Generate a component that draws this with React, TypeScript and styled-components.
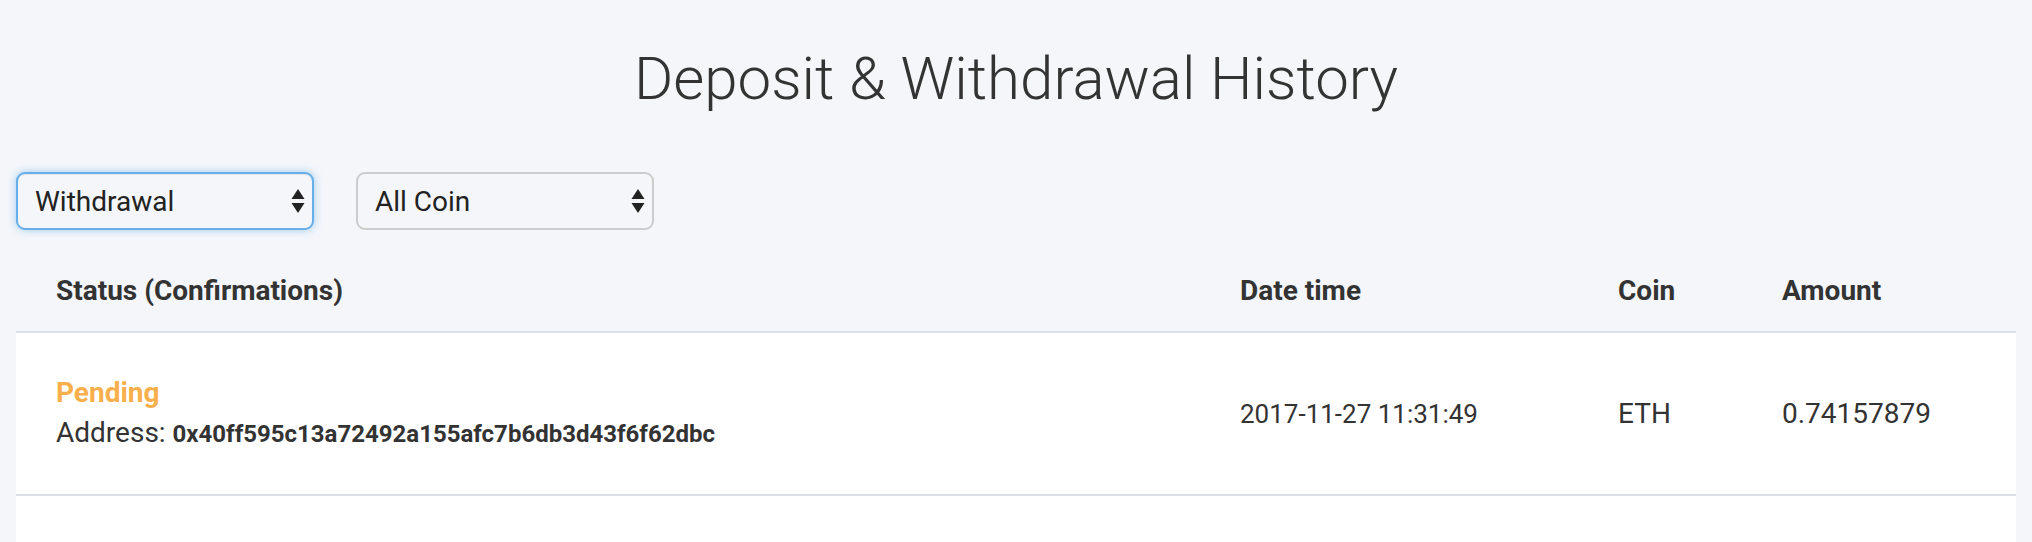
import React from "react";
import styled, { createGlobalStyle } from "styled-components";

const GlobalStyle = createGlobalStyle`
  html, body {
    margin: 0;
    padding: 0;
    background: #f4f6fa;
    font-family: Roboto, "Liberation Sans", Arial, sans-serif;
    color: #333;
  }
  * { box-sizing: border-box; }
`;

const Page = styled.div`
  display: flex;
  flex-direction: column;
  padding: 0 16px;
  min-height: 542px;
`;

const Title = styled.h1`
  margin: 46px 0 0;
  font-weight: 300;
  font-size: 60px;
  line-height: 66px;
  text-align: center;
  color: #333;
`;

const Filters = styled.div`
  display: flex;
  gap: 42px;
  margin-top: 60px;
`;

const SelectWrap = styled.div`
  position: relative;
  width: 298px;
  height: 58px;
`;

const Select = styled.select<{ $focused?: boolean }>`
  appearance: none;
  -webkit-appearance: none;
  width: 100%;
  height: 100%;
  margin: 0;
  padding: 0 40px 0 17px;
  font-family: Roboto, "Liberation Sans", Arial, sans-serif;
  font-size: 28px;
  color: #222;
  background: #f4f6fa;
  border: 2px solid ${(p) => (p.$focused ? "#66afe9" : "#cccccc")};
  border-radius: 9px;
  box-shadow: ${(p) =>
    p.$focused
      ? "inset 0 1px 1px rgba(0,0,0,.075), 0 0 8px rgba(102,175,233,.6)"
      : "none"};
  outline: none;
`;

const Arrows = styled.svg`
  position: absolute;
  right: 9px;
  top: 17px;
  width: 14px;
  height: 25px;
  pointer-events: none;
`;

const Panel = styled.div`
  margin-top: 21px;
  background: #fff;
  flex: 1;
`;

const Table = styled.table`
  width: 100%;
  border-collapse: collapse;
  table-layout: fixed;
`;

const Head = styled.thead`
  background: #f4f6fa;
`;

const Th = styled.th<{ $w: number }>`
  width: ${(p) => p.$w}px;
  padding: 20px 0 20px 40px;
  text-align: left;
  font-size: 28px;
  line-height: 40px;
  font-weight: 700;
  color: #333;
  border-bottom: 2px solid #dce0e8;
`;

const Row = styled.tr`
  border-bottom: 2px solid #dce0e8;
`;

const Td = styled.td<{ $size?: number }>`
  padding: 40px 0 40px 40px;
  font-size: ${(p) => p.$size ?? 28}px;
  line-height: 40px;
  color: #333;
  vertical-align: middle;
`;

const Status = styled.div`
  font-weight: 700;
  color: #f9b04c;
`;

const Address = styled.div`
  white-space: nowrap;
`;

const Hash = styled.span`
  font-weight: 700;
  font-size: 24px;
`;

const ArrowIcon = () => (
  <Arrows viewBox="0 0 14 25">
    <polygon points="7,0 13.5,10 0.5,10" fill="#222" />
    <polygon points="0.5,14 13.5,14 7,24" fill="#222" />
  </Arrows>
);

export default function App() {
  return (
    <>
      <GlobalStyle />
      <Page>
        <Title>Deposit &amp; Withdrawal History</Title>
        <Filters>
          <SelectWrap>
            <Select $focused defaultValue="withdrawal">
              <option value="deposit">Deposit</option>
              <option value="withdrawal">Withdrawal</option>
            </Select>
            <ArrowIcon />
          </SelectWrap>
          <SelectWrap>
            <Select defaultValue="all">
              <option value="all">All Coin</option>
              <option value="eth">ETH</option>
              <option value="btc">BTC</option>
            </Select>
            <ArrowIcon />
          </SelectWrap>
        </Filters>
        <Panel>
          <Table>
            <Head>
              <tr>
                <Th $w={1184}>Status (Confirmations)</Th>
                <Th $w={378}>Date time</Th>
                <Th $w={164}>Coin</Th>
                <Th $w={274}>Amount</Th>
              </tr>
            </Head>
            <tbody>
              <Row>
                <Td>
                  <Status>Pending</Status>
                  <Address>
                    Address: <Hash>0x40ff595c13a72492a155afc7b6db3d43f6f62dbc</Hash>
                  </Address>
                </Td>
                <Td $size={26}>2017-11-27 11:31:49</Td>
                <Td>ETH</Td>
                <Td>0.74157879</Td>
              </Row>
            </tbody>
          </Table>
        </Panel>
      </Page>
    </>
  );
}
